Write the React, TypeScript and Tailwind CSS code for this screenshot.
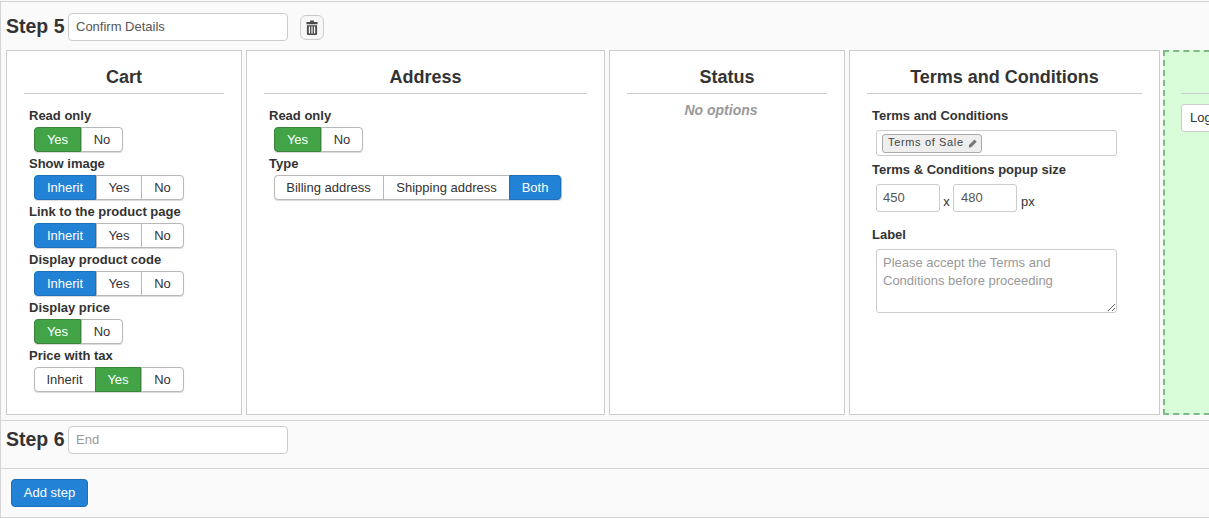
type Option = { label: string; width: string; on?: 'green' | 'blue' };

function Toggle({ options }: { options: Option[] }) {
  return (
    <div className="ml-[5px] flex h-[25px] w-fit rounded-[4px] border border-[#b8b8b8] bg-white shadow-[0_1px_1px_rgba(0,0,0,0.15)]">
      {options.map((o, i) => (
        <div
          key={o.label}
          className={`flex items-center justify-center text-[13px] ${o.width} ${
            o.on === 'green'
              ? '-my-px border border-[#398439] bg-[#43a447] text-white'
              : o.on === 'blue'
                ? '-my-px border border-[#1b6fbd] bg-[#2182d6] text-white'
                : 'text-[#333]'
          } ${i > 0 && !o.on ? 'border-l border-[#b8b8b8]' : ''} ${i === 0 ? '-ml-px rounded-l-[4px]' : ''} ${
            i === options.length - 1 ? 'rounded-r-[4px]' : ''
          }`}
        >
          {o.label}
        </div>
      ))}
    </div>
  );
}

function Field({ label, options }: { label: string; options: Option[] }) {
  return (
    <div className="h-[48px] pl-[5px]">
      <div className="h-[23px] pt-[2px] text-[13px] leading-[20px] font-bold text-[#333]">{label}</div>
      <Toggle options={options} />
    </div>
  );
}

function Card({ title, width, children }: { title: string; width: string; children?: React.ReactNode }) {
  return (
    <div className={`h-[365px] shrink-0 border border-[#ccc] bg-white px-[17px] ${width}`}>
      <h3 className="mt-[14px] h-[29px] border-b border-[#ccc] text-center text-[18px] leading-[24px] font-bold text-[#333]">
        {title}
      </h3>
      {children}
    </div>
  );
}

function TrashIcon() {
  return (
    <svg width="12" height="15" viewBox="0 0 13 16" className="text-[#4a4a4a]">
      <path d="M4.5 0.5h4v1.5h4v2.5h-12V2h4z" fill="currentColor" />
      <path
        fillRule="evenodd"
        d="M1 5.5h11V15a1 1 0 0 1-1 1H2a1 1 0 0 1-1-1zM3 7v7.5h1.4V7zM5.8 7v7.5h1.4V7zM8.6 7v7.5H10V7z"
        fill="currentColor"
      />
    </svg>
  );
}

const yesNo: Option[] = [
  { label: 'Yes', width: 'w-[47px]', on: 'green' },
  { label: 'No', width: 'w-[41px]' },
];

const inherit: Option[] = [
  { label: 'Inherit', width: 'w-[62px]', on: 'blue' },
  { label: 'Yes', width: 'w-[45px]' },
  { label: 'No', width: 'w-[42px]' },
];

const taxOptions: Option[] = [
  { label: 'Inherit', width: 'w-[61px]' },
  { label: 'Yes', width: 'w-[46px]', on: 'green' },
  { label: 'No', width: 'w-[42px]' },
];

const addressType: Option[] = [
  { label: 'Billing address', width: 'w-[109px]' },
  { label: 'Shipping address', width: 'w-[126px]' },
  { label: 'Both', width: 'w-[52px]', on: 'blue' },
];

export default function App() {
  return (
    <div className="h-[518px] w-[1209px] overflow-hidden bg-[#fafafa] font-['Liberation_Sans',Arial,sans-serif] text-[#333]">
      <div className="pt-px">
        <div className="border-t border-l border-[#d4d4d4] pt-[11px] pb-[5px] pl-[5px]">
          <div className="flex h-[28px] items-center">
            <span className="w-[62px] pb-[1px] text-[19.5px] font-bold whitespace-nowrap">Step 5</span>
            <input
              readOnly
              value="Confirm Details"
              className="h-[28px] w-[220px] rounded-[4px] border border-[#ccc] bg-white px-[7px] pb-[2px] text-[13px] text-[#555] outline-none"
            />
            <button className="ml-[12px] flex h-[25px] w-[24px] items-center justify-center rounded-[6px] border border-[#ccc] bg-[#f7f7f7]">
              <TrashIcon />
            </button>
          </div>
          <div className="mt-[9px] flex gap-[4px] overflow-hidden">
            <Card title="Cart" width="w-[236px]">
              <div className="pt-[10px]">
                <Field label="Read only" options={yesNo} />
                <Field label="Show image" options={inherit} />
                <Field label="Link to the product page" options={inherit} />
                <Field label="Display product code" options={inherit} />
                <Field label="Display price" options={yesNo} />
                <Field label="Price with tax" options={taxOptions} />
              </div>
            </Card>
            <Card title="Address" width="w-[359px]">
              <div className="pt-[10px]">
                <Field label="Read only" options={yesNo} />
                <Field label="Type" options={addressType} />
              </div>
            </Card>
            <Card title="Status" width="w-[236px]">
              <p className="pt-[6px] pr-[12px] text-center text-[14px] leading-[20px] font-bold text-[#999] italic">
                No options
              </p>
            </Card>
            <Card title="Terms and Conditions" width="w-[311px]">
              <div className="pt-[10px] pl-[5px]">
                <div className="h-[26px] pt-[2px] text-[13px] leading-[20px] font-bold">Terms and Conditions</div>
                <div className="ml-[4px] flex h-[26px] w-[241px] items-center rounded-[3px] border border-[#ccc] bg-white pl-[5px]">
                  <span className="flex h-[19px] w-[100px] items-center justify-between rounded-[3px] border border-[#aaa] bg-[#eee] pr-[3px] pb-[2px] pl-[5px] text-[11px] tracking-[0.65px] text-[#444]">
                    Terms of Sale
                    <svg width="10" height="10" viewBox="0 0 10 10" className="mt-[2px] text-[#777]">
                      <path d="M1 7l5.5-5.5 2.2 2.2L3.2 9.2 0.8 9.4z" fill="currentColor" />
                    </svg>
                  </span>
                </div>
                <div className="mt-[3px] h-[25px] pt-px text-[13px] leading-[20px] font-bold">
                  Terms &amp; Conditions popup size
                </div>
                <div className="ml-[4px] flex items-start text-[13px]">
                  <input
                    readOnly
                    value="450"
                    className="h-[28px] w-[64px] rounded-[3px] border border-[#ccc] bg-white px-[6px] pb-[2px] text-[13px] text-[#555] outline-none"
                  />
                  <span className="w-[13px] pt-[8px] text-center leading-[20px]">x</span>
                  <input
                    readOnly
                    value="480"
                    className="h-[28px] w-[64px] rounded-[3px] border border-[#ccc] bg-white px-[7px] pb-[2px] text-[13px] text-[#555] outline-none"
                  />
                  <span className="pt-[8px] pl-[4px] leading-[20px]">px</span>
                </div>
                <div className="mt-[13px] h-[24px] text-[13px] leading-[20px] font-bold">Label</div>
                <textarea
                  readOnly
                  placeholder={'Please accept the Terms and Conditions before proceeding'}
                  className="ml-[4px] block h-[64px] w-[241px] rounded-[3px] border border-[#ccc] bg-white px-[6px] pt-[4px] pb-[2px] text-[13px] leading-[18px] outline-none placeholder:text-[#999]"
                />
              </div>
            </Card>
            <div className="-ml-px h-[365px] w-[200px] shrink-0 border-2 border-dashed border-[#7fb98a] bg-[#d9fdd9] pl-[16px]">
              <div className="mt-[41px] border-b border-[#ccc]" />
              <div className="mt-[10px] flex h-[28px] items-center rounded-[3px] border border-[#ccc] bg-white pl-[8px] text-[13px]">
                Login
              </div>
            </div>
          </div>
        </div>
        <div className="border-t border-l border-[#d4d4d4] pt-[5px] pb-[14px] pl-[5px]">
          <div className="flex h-[28px] items-center">
            <span className="w-[62px] pb-[1px] text-[19.5px] font-bold whitespace-nowrap">Step 6</span>
            <input
              readOnly
              placeholder="End"
              className="h-[28px] w-[220px] rounded-[4px] border border-[#ccc] bg-white px-[7px] pb-[2px] text-[13px] outline-none placeholder:text-[#999]"
            />
          </div>
        </div>
        <div className="h-[50px] border-t border-b border-l border-[#d4d4d4] pt-[10px] pl-[10px]">
          <button className="flex h-[28px] w-[77px] items-center justify-center rounded-[4px] border border-[#1b6fbd] bg-[#2182d6] text-[13px] text-white">
            Add step
          </button>
        </div>
      </div>
    </div>
  );
}
